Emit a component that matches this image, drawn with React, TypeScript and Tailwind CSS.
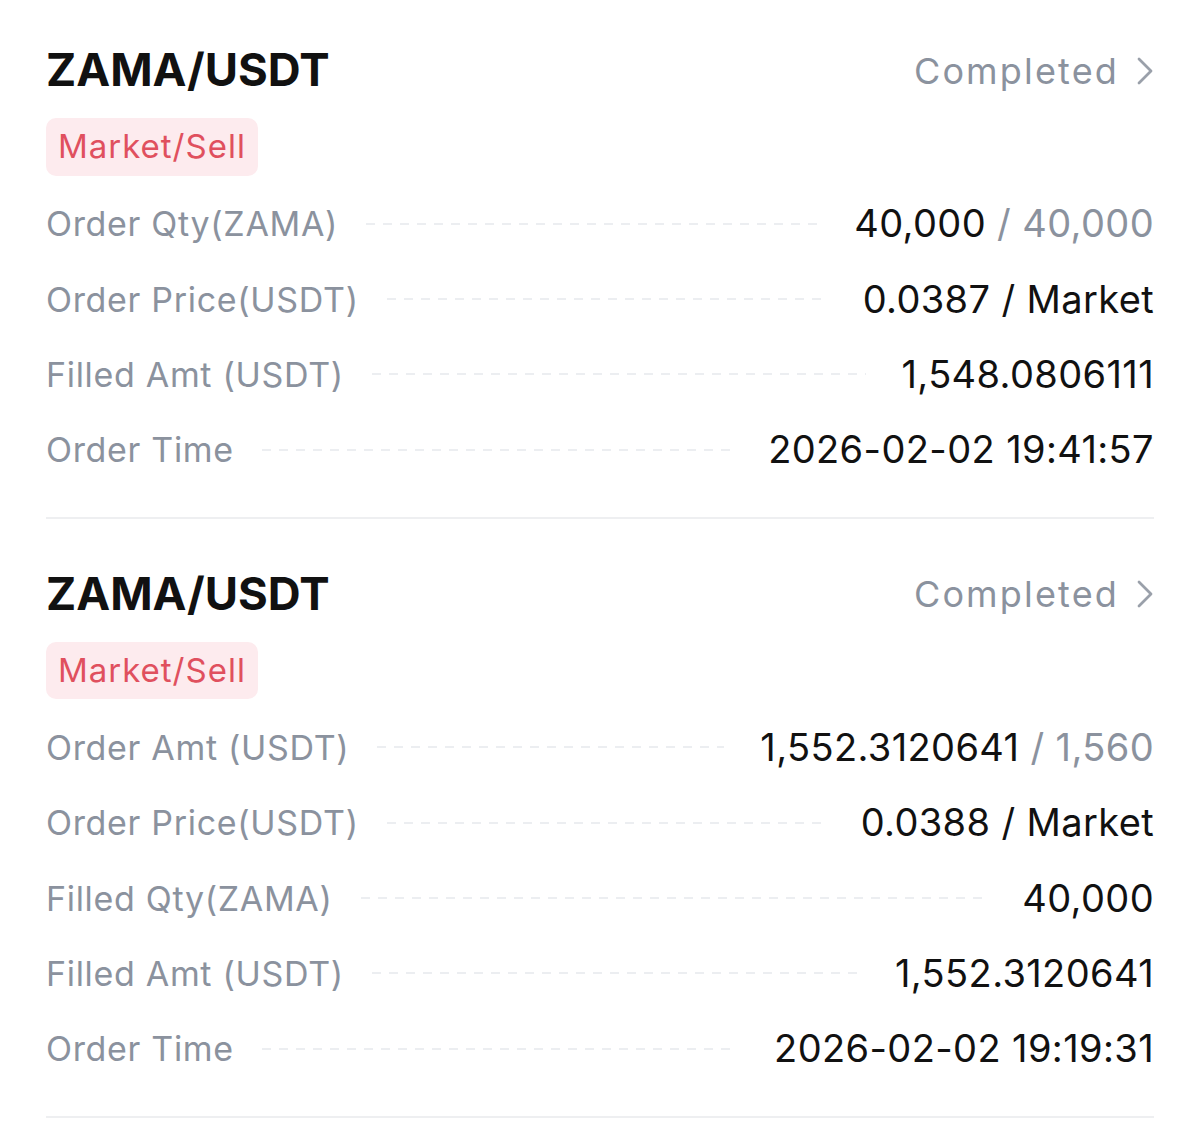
import React from 'react';

type Row = { label: string; value: string; total?: string };

const orders: { pair: string; side: string; status: string; rows: Row[] }[] = [
  {
    pair: 'ZAMA/USDT',
    side: 'Market/Sell',
    status: 'Completed',
    rows: [
      { label: 'Order Qty(ZAMA)', value: '40,000', total: '40,000' },
      { label: 'Order Price(USDT)', value: '0.0387 / Market' },
      { label: 'Filled Amt (USDT)', value: '1,548.0806111' },
      { label: 'Order Time', value: '2026-02-02 19:41:57' },
    ],
  },
  {
    pair: 'ZAMA/USDT',
    side: 'Market/Sell',
    status: 'Completed',
    rows: [
      { label: 'Order Amt (USDT)', value: '1,552.3120641', total: '1,560' },
      { label: 'Order Price(USDT)', value: '0.0388 / Market' },
      { label: 'Filled Qty(ZAMA)', value: '40,000' },
      { label: 'Filled Amt (USDT)', value: '1,552.3120641' },
      { label: 'Order Time', value: '2026-02-02 19:19:31' },
    ],
  },
];

function DetailRow({ row }: { row: Row }) {
  return (
    <div className="flex h-[75.4px] items-center">
      <span className="text-[34px] tracking-[0.02em] text-[#8b929e]">{row.label}</span>
      <div className="ml-[28px] mr-[36px] h-[2px] flex-1 bg-[repeating-linear-gradient(to_right,#eceef1_0px,#eceef1_9px,transparent_9px,transparent_17px)]" />
      <span className="text-[38px] tracking-[0.01em] text-[#111]">
        {row.value}
        {row.total && <span className="text-[#8b929e]"> / {row.total}</span>}
      </span>
    </div>
  );
}

export default function App() {
  return (
    <div className="min-h-[1136px] bg-white px-[46px] pt-[33px] font-['Inter',sans-serif]">
      {orders.map((o, i) => (
        <div key={i} className={i > 0 ? 'pt-[38px]' : ''}>
          <div className="flex h-[75px] items-center justify-between">
            <h2 className="text-[45.5px] font-bold text-[#111]">{o.pair}</h2>
            <div className="flex items-center gap-[18px] text-[#8b929e]">
              <span className="text-[36px] tracking-[0.06em]">{o.status}</span>
              <svg width="16" height="28" viewBox="0 0 16 28" fill="none" className="mr-[1px]">
                <path d="M2 2 L14 14 L2 26" stroke="#9aa0aa" strokeWidth="2.8" strokeLinecap="round" strokeLinejoin="round" />
              </svg>
            </div>
          </div>
          <div className="flex h-[78px] items-center">
            <span className="rounded-[10px] bg-[#fdebee] px-[12px] py-[4px] text-[33px] tracking-[0.03em] text-[#e0505e]">
              {o.side}
            </span>
          </div>
          {o.rows.map((r, j) => (
            <DetailRow key={j} row={r} />
          ))}
          <div className="mt-[29px] h-[2px] bg-[#eeeff1]" />
        </div>
      ))}
    </div>
  );
}
